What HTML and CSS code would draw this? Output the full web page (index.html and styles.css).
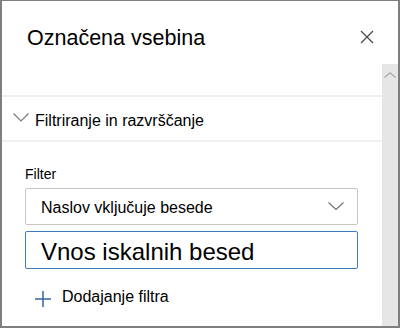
FILE: index.html
```html
<!DOCTYPE html>
<html lang="sl">
<head>
<meta charset="utf-8">
<title>Označena vsebina</title>
<link rel="stylesheet" href="styles.css">
</head>
<body>
<div class="frame">
  <header class="header">
    <h1 class="title">Označena vsebina</h1>
    <button class="close" aria-label="Zapri">
      <svg width="14" height="14" viewBox="0 0 14 14"><path d="M1 1L13 13M13 1L1 13" stroke="#4a4a4a" stroke-width="1.3" fill="none"/></svg>
    </button>
  </header>
  <div class="main">
    <div class="content">
      <div class="sep"></div>
      <div class="section-head">
        <svg class="chev" width="16" height="9" viewBox="0 0 16 9"><path d="M0.5 0.5L8 8L15.5 0.5" stroke="#7a7a7a" stroke-width="1.2" fill="none"/></svg>
        <span>Filtriranje in razvrščanje</span>
      </div>
      <div class="sep"></div>
      <div class="body">
        <div class="label">Filter</div>
        <div class="dropdown">
          <span>Naslov vključuje besede</span>
          <svg width="16" height="8" viewBox="0 0 16 8"><path d="M0.5 0.5L8 7.5L15.5 0.5" stroke="#6e6e6e" stroke-width="1.1" fill="none"/></svg>
        </div>
        <div class="input">Vnos iskalnih besed</div>
        <div class="add">
          <svg width="16" height="16" viewBox="0 0 16 16"><path d="M8 0V16M0 8H16" stroke="#35669c" stroke-width="1.5" fill="none"/></svg>
          <span>Dodajanje filtra</span>
        </div>
      </div>
    </div>
    <div class="scrollbar">
      <svg width="12" height="6" viewBox="0 0 12 6"><path d="M0.5 5.5L6 0.8L11.5 5.5" stroke="#a8a8a8" stroke-width="1.1" fill="none"/></svg>
    </div>
  </div>
</div>
</body>
</html>
```
FILE: styles.css
```css
html, body {
  margin: 0;
  padding: 0;
  background: #fff;
}
body {
  font-family: "Liberation Sans", Arial, sans-serif;
  color: #000;
}
.frame {
  width: 400px;
  height: 328px;
  box-sizing: border-box;
  border-style: solid;
  border-color: #7f7f7f;
  border-width: 1px 2px 2px 2px;
  display: flex;
  flex-direction: column;
  overflow: hidden;
}
.header {
  height: 63px;
  flex: none;
  display: flex;
  justify-content: space-between;
  align-items: flex-start;
  box-sizing: border-box;
  padding: 23px 24px 0 25px;
}
.title {
  margin: 0;
  font-weight: normal;
  font-size: 21.5px;
  line-height: 28px;
  color: #000;
}
.close {
  border: 0;
  background: none;
  padding: 0;
  margin-top: 6px;
  width: 14px;
  height: 14px;
  display: block;
}
.close svg { display: block; }
.main {
  flex: 1;
  display: flex;
  min-height: 0;
}
.content {
  flex: 1;
  padding-top: 31px;
}
.sep {
  height: 2px;
  background: #f0f0f0;
}
.section-head {
  height: 43px;
  box-sizing: border-box;
  padding: 14px 0 0 11px;
  display: flex;
  align-items: flex-start;
  gap: 6px;
  font-size: 16px;
  line-height: 20px;
}
.chev {
  display: block;
  margin-top: 2px;
}
.body {
  padding: 24px 24px 0 23px;
}
.label {
  font-size: 14px;
  line-height: 17px;
  margin-bottom: 5px;
}
.dropdown {
  height: 37px;
  box-sizing: border-box;
  border: 1px solid #c6c6c6;
  border-radius: 2px;
  display: flex;
  align-items: center;
  justify-content: space-between;
  padding: 3px 13px 0 15px;
  font-size: 16px;
}
.dropdown svg {
  display: block;
  margin-top: -4px;
}
.input {
  margin-top: 6px;
  height: 38px;
  box-sizing: border-box;
  border: 1px solid #3f7cbf;
  border-radius: 2px;
  display: flex;
  align-items: center;
  padding: 4px 15px 0 15px;
  font-size: 24px;
}
.add {
  margin-top: 18px;
  padding-left: 10px;
  display: flex;
  align-items: flex-start;
  gap: 11px;
  font-size: 16px;
  line-height: 20px;
}
.add svg {
  display: block;
  margin-top: 4px;
}
.scrollbar {
  width: 16px;
  flex: none;
  background: #e6e6e6;
  display: flex;
  justify-content: center;
  padding-top: 8px;
  box-sizing: border-box;
}
.scrollbar svg { display: block; }
```
